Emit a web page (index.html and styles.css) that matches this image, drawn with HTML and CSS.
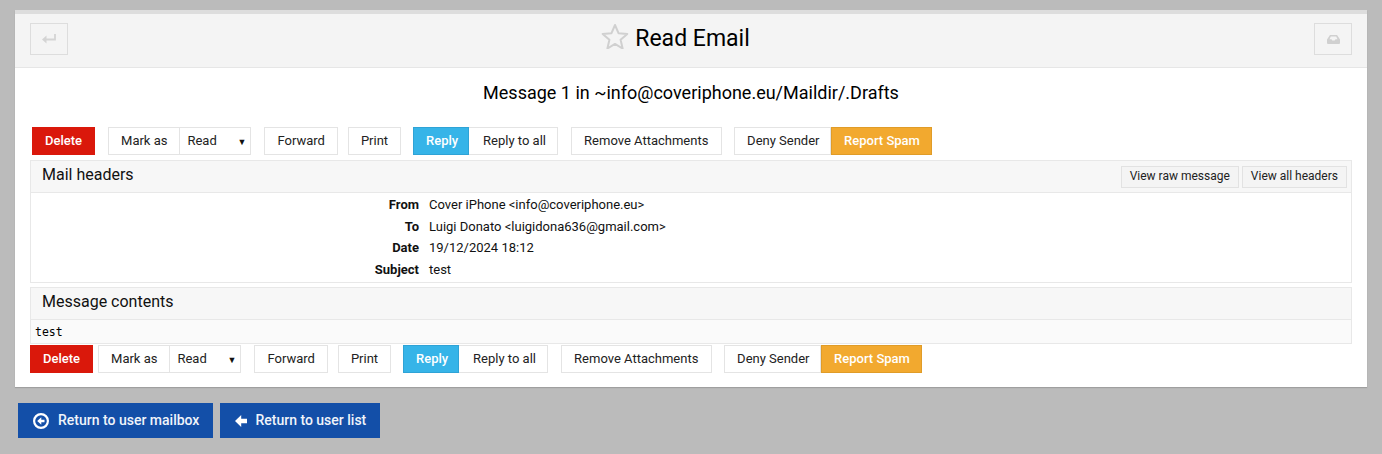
FILE: index.html
```html
<!DOCTYPE html>
<html lang="en">
<head>
    <meta charset="UTF-8">
    <meta name="viewport" content="width=device-width, initial-scale=1.0">
    <title>Read Email</title>
    <link rel="stylesheet" href="styles.css">
</head>
<body>
<div class="card">
    <div class="card-head">
        <a href="#" class="head-btn">
            <svg class="back-icon" width="14" height="10" viewBox="0 0 14 10"><path d="M13 0v5.500H3" fill="none" stroke="#d4d4d4" stroke-width="1.800"/><path d="M0 5.500L4.500 1.500V9.500Z" fill="#d4d4d4"/></svg>
        </a>
        <div class="head-title">
            <svg class="star" width="28" height="26" viewBox="0 0 28 26"><path d="M14 2l3.500 8.200 8.800.8-6.700 5.800 2 8.700L14 20.900 6.400 25.500l2-8.700L1.700 11l8.800-.8z" fill="none" stroke="#d0d0d0" stroke-width="2" stroke-linejoin="round"/></svg>
            <h1>Read Email</h1>
        </div>
        <a href="#" class="head-btn">
            <svg width="13" height="9" viewBox="0 0 13 9"><path d="M3 0h7l3 4.500V8a1 1 0 0 1-1 1H1a1 1 0 0 1-1-1V4.500zM3.800 1.500L2.500 4.300H4.500l.8 1.200h2.400l.8-1.200h2L9.200 1.500z" fill="#d0d0d0" fill-rule="evenodd"/></svg>
        </a>
    </div>

    <h2 class="msg-title">Message 1 in ~info@coveriphone.eu/Maildir/.Drafts</h2>

    <div class="toolbar toolbar-top">
        <a href="#" class="btn btn-red">Delete</a>
        <div class="group after-delete">
            <a href="#" class="btn">Mark as</a>
            <span class="btn select">Read<i class="caret">▼</i></span>
        </div>
        <a href="#" class="btn wide-gap">Forward</a>
        <a href="#" class="btn small-gap">Print</a>
        <div class="group">
            <a href="#" class="btn btn-blue reply">Reply</a>
            <a href="#" class="btn reply-all">Reply to all</a>
        </div>
        <a href="#" class="btn wide-gap remove">Remove Attachments</a>
        <div class="group">
            <a href="#" class="btn deny">Deny Sender</a>
            <a href="#" class="btn btn-orange">Report Spam</a>
        </div>
    </div>

    <div class="panel">
        <div class="panel-head">
            <span class="panel-title">Mail headers</span>
            <div class="panel-actions">
                <a href="#" class="btn-sm">View raw message</a>
                <a href="#" class="btn-sm">View all headers</a>
            </div>
        </div>
        <div class="mail-headers">
            <b>From</b><span>Cover iPhone &lt;info@coveriphone.eu&gt;</span>
            <b>To</b><span>Luigi Donato &lt;luigidona636@gmail.com&gt;</span>
            <b>Date</b><span>19/12/2024 18:12</span>
            <b>Subject</b><span>test</span>
        </div>
    </div>

    <div class="panel panel-msg">
        <div class="panel-head"><span class="panel-title">Message contents</span></div>
        <pre class="msg-body">test</pre>
    </div>

    <div class="toolbar toolbar-bottom">
        <a href="#" class="btn btn-red">Delete</a>
        <div class="group after-delete-b">
            <a href="#" class="btn">Mark as</a>
            <span class="btn select">Read<i class="caret">▼</i></span>
        </div>
        <a href="#" class="btn wide-gap">Forward</a>
        <a href="#" class="btn small-gap">Print</a>
        <div class="group">
            <a href="#" class="btn btn-blue reply">Reply</a>
            <a href="#" class="btn reply-all">Reply to all</a>
        </div>
        <a href="#" class="btn wide-gap remove">Remove Attachments</a>
        <div class="group">
            <a href="#" class="btn deny">Deny Sender</a>
            <a href="#" class="btn btn-orange">Report Spam</a>
        </div>
    </div>
</div>

<div class="footer-links">
    <a href="#" class="btn-main">
        <svg width="16" height="16" viewBox="0 0 16 16"><path fill-rule="evenodd" d="M8 0a8 8 0 1 1 0 16A8 8 0 0 1 8 0zm0 2.200a5.800 5.800 0 1 0 0 11.600A5.800 5.800 0 0 0 8 2.200zM8.300 4.300v2.500h3.200v2.400H8.300v2.500L4.200 8z" fill="#fff"/></svg>
        <span class="btn-main-text">Return to user mailbox</span>
    </a>
    <a href="#" class="btn-main btn-main-list">
        <svg width="12" height="12" viewBox="0 0 12 12"><path d="M6.200 0v3.800H12v4.400H6.200V12L0 6z" fill="#fff"/></svg>
        <span class="btn-main-text">Return to user list</span>
    </a>
</div>
</body>
</html>
```

FILE: styles.css
```css
body {
    font-family: Roboto, "Liberation Sans", sans-serif;
    background-color: #bbbbbb;
    color: #111;
    margin: 0;
    padding: 10px 15px 0;
    font-size: 13px;
}

a {
    text-decoration: none;
    color: inherit;
}

.card {
    background-color: #fff;
    border-top: 4px solid #dddddd;
    height: 373px;
    box-shadow: 0 1px 1px rgba(0, 0, 0, 0.15);
}

.card-head {
    display: flex;
    align-items: center;
    justify-content: space-between;
    height: 54px;
    padding: 0 15px 3px;
    box-sizing: border-box;
    background-color: #f4f4f4;
    border-bottom: 1px solid #e6e6e6;
}

.head-btn {
    display: flex;
    align-items: center;
    justify-content: center;
    width: 38px;
    height: 32px;
    box-sizing: border-box;
    border: 1px solid #dddddd;
}

.back-icon {
    margin-right: 1px;
}

.head-title {
    display: flex;
    align-items: center;
    gap: 6px;
    margin-right: 30px;
    padding-bottom: 2px;
}

.star {
    margin: 0 0 4px -1px;
}

.head-title h1 {
    margin: 0;
    font-size: 23px;
    font-weight: 400;
    color: #000;
}

.msg-title {
    margin: 0;
    padding-top: 14px;
    height: 59px;
    box-sizing: border-box;
    text-align: center;
    font-size: 18px;
    line-height: 21px;
    font-weight: 400;
    color: #000;
}

.toolbar {
    display: flex;
    height: 28px;
}

.toolbar-top {
    margin-left: 17px;
}

.toolbar-bottom {
    margin: 1px 0 0 15px;
}

.group {
    display: flex;
    margin-left: 12px;
}

.after-delete {
    margin-left: 13px;
}

.after-delete-b {
    margin-left: 5px;
}

.wide-gap {
    margin-left: 13px;
}

.small-gap {
    margin-left: 10px;
}

.btn {
    display: flex;
    align-items: center;
    height: 28px;
    padding: 0 12px 2px;
    box-sizing: border-box;
    background-color: #fff;
    border: 1px solid #e4e4e4;
    color: #222;
}

.reply {
    width: 56px;
    padding-right: 0;
}

.reply-all {
    width: 89px;
    padding-left: 14px;
    padding-right: 0;
    border-left: none;
}

.remove {
    width: 151px;
    padding-right: 0;
}

.deny {
    width: 97px;
    padding-right: 0;
}

.select {
    width: 72px;
    padding: 0 7px 2px;
    margin-left: -1px;
    justify-content: space-between;
}

.caret {
    font-style: normal;
    font-size: 9px;
    color: #111;
    margin: 3px -3px 0 0;
}

.btn-red {
    background-color: #da180b;
    border-color: #da180b;
    color: #fff;
    font-weight: 500;
}

.btn-blue {
    background-color: #36b4e8;
    border-color: #2fa3d6;
    color: #fff;
    font-weight: 500;
}

.btn-orange {
    width: 101px;
    padding-right: 0;
    background-color: #f2a92f;
    border-color: #e09c28;
    color: #fff;
    font-weight: 500;
}

.panel {
    margin: 5px 15px 0;
    border: 1px solid #e8e8e8;
}

.panel-msg {
    margin-top: 4px;
}

.panel-head {
    display: flex;
    align-items: center;
    justify-content: space-between;
    height: 32px;
    padding: 0 4px 0 11px;
    box-sizing: border-box;
    background-color: #f7f7f7;
    border-bottom: 1px solid #e8e8e8;
    font-size: 16px;
    color: #111;
}

.panel-title {
    padding-bottom: 5px;
}

.panel-actions {
    display: flex;
    gap: 3px;
}

.btn-sm {
    display: block;
    padding: 0 8px;
    height: 22px;
    line-height: 18px;
    box-sizing: border-box;
    background-color: #f4f4f4;
    border: 1px solid #e2e2e2;
    font-size: 12px;
    color: #222;
}

.mail-headers {
    display: grid;
    grid-template-columns: 388px 1fr;
    column-gap: 10px;
    padding: 1px 0 3px;
    line-height: 21.500px;
    height: 89px;
    box-sizing: border-box;
    font-size: 13px;
    color: #111;
}

.mail-headers b {
    text-align: right;
    font-weight: 700;
}

.msg-body {
    margin: 0;
    padding: 4px 4px 3px;
    height: 23px;
    box-sizing: border-box;
    line-height: 16px;
    background-color: #fafafa;
    font-family: "DejaVu Sans Mono", monospace;
    font-size: 11.500px;
    color: #000;
}

.footer-links {
    display: flex;
    gap: 7px;
    margin: 16px 0 0 3px;
}

.btn-main {
    display: flex;
    align-items: center;
    gap: 9px;
    height: 35px;
    padding: 0 14px 0 15px;
    box-sizing: border-box;
    background-color: #134fa8;
    font-size: 14px;
    font-weight: 500;
    color: #f0f4fa;
}

.btn-main-list {
    gap: 8px;
}

.btn-main-text {
    padding-bottom: 2px;
}
```
